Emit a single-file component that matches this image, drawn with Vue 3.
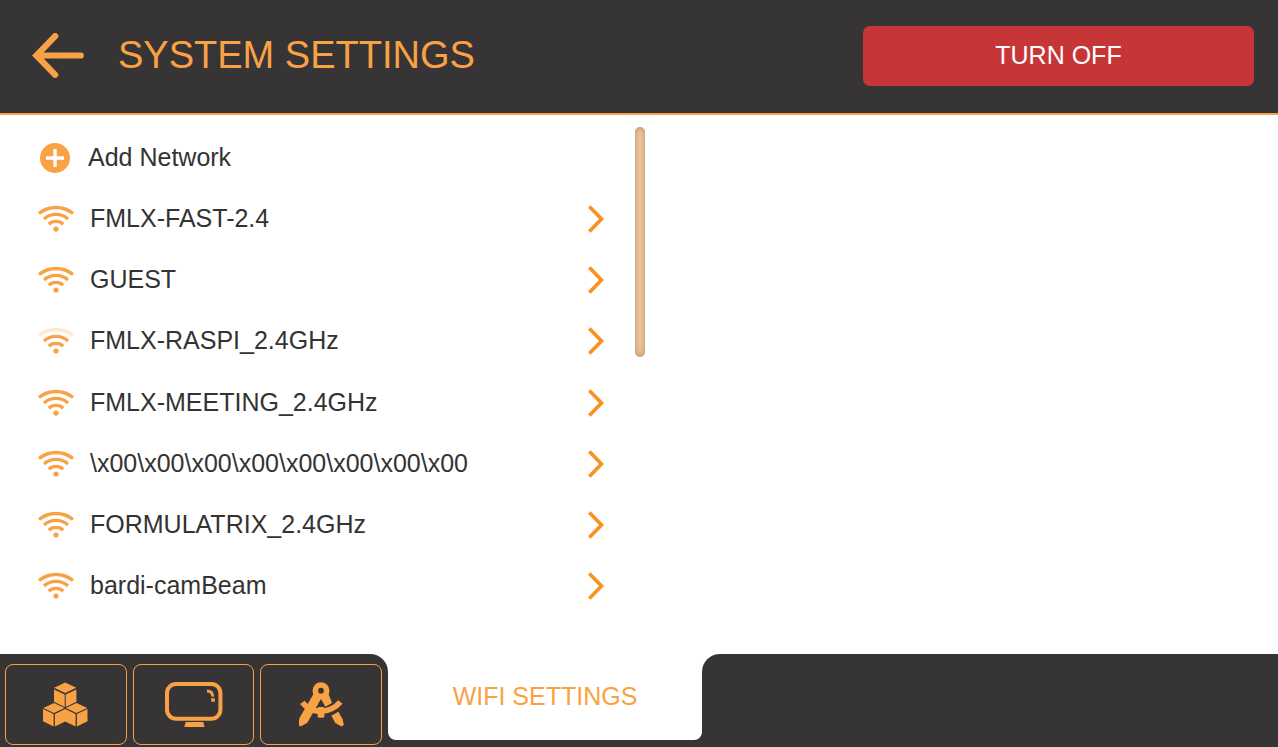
<template>
  <div class="page">
    <header class="header">
      <button class="back" aria-label="Back">
        <svg width="52" height="46" viewBox="0 0 52 46">
          <path d="M23.2 3.2L4.4 22.5L23.2 41.8M5 22.5H48.8" fill="none" stroke="currentColor" stroke-width="6.2" stroke-linecap="round" />
        </svg>
      </button>
      <h1 class="title">SYSTEM SETTINGS</h1>
      <button class="turn-off">TURN OFF</button>
    </header>

    <main class="content">
      <section class="panel">
        <ul class="list">
          <li class="item">
            <button class="row add">
              <svg width="30" height="30" viewBox="0 0 30 30">
                <circle cx="15" cy="15" r="15" fill="currentColor" />
                <path d="M15 6V24M6 15H24" stroke="#fff" stroke-width="3.4" />
              </svg>
              <span class="name">Add Network</span>
            </button>
          </li>
          <li v-for="network in networks" :key="network.name" class="item">
            <button class="row">
              <svg width="36" height="28" viewBox="0 0 36 28" fill="none" stroke="currentColor" stroke-width="3.3">
                <path :class="{ weak: network.level < 3 }" d="M1 8.5A27 27 0 0 1 35 8.5" />
                <path d="M6 13.9A18 18 0 0 1 30 13.9" />
                <path d="M10.8 19.2A10.5 10.5 0 0 1 25.2 19.2" />
                <circle cx="18" cy="24" r="2.6" fill="currentColor" stroke="none" />
              </svg>
              <span class="name">{{ network.name }}</span>
              <svg class="chevron" width="16" height="28" viewBox="0 0 16 28">
                <path d="M1.3 1.5L13.5 14L1.3 26.5" fill="none" stroke="currentColor" stroke-width="3.7" />
              </svg>
            </button>
          </li>
        </ul>
        <div class="track">
          <div class="thumb"></div>
        </div>
      </section>
    </main>

    <footer class="footer">
      <nav class="nav">
        <button class="nav-btn" aria-label="Modules">
          <svg width="45" height="45" viewBox="0 0 45 45" fill="currentColor">
            <path d="M22.2 0.6L33.3 5.8L22.2 11.1L11.1 5.8Z" />
            <path d="M11 7.4L21.7 12.5V25L11 19.8Z" />
            <path d="M33.4 7.4L22.7 12.5V25L33.4 19.8Z" />
            <path d="M11 20.9L21.6 25.9L11 31L0.4 25.9Z" />
            <path d="M33.5 20.9L44.1 25.9L33.5 31L22.9 25.9Z" />
            <path d="M0 27L10.6 32.1V44.4L0 39.2Z" />
            <path d="M11.9 32.1L22.2 27L32.6 32.1V44.4L22.2 39.4L11.9 44.4Z" />
            <path d="M44.5 27L33.9 32.1V44.4L44.5 39.2Z" />
          </svg>
        </button>
        <button class="nav-btn" aria-label="Display">
          <svg width="58" height="45" viewBox="0 0 58 45">
            <rect x="2" y="2" width="53.4" height="34.8" rx="9" fill="none" stroke="currentColor" stroke-width="4" />
            <path d="M42 9C45.6 9 47.6 11 47.8 14.6" fill="none" stroke="currentColor" stroke-width="2.8" />
            <path d="M46.2 16.3H49.8V19.8H46.2ZM20.7 40H38.3L39.5 45H19.3Z" fill="currentColor" />
          </svg>
        </button>
        <button class="nav-btn" aria-label="Calibration">
          <svg width="45" height="45" viewBox="25 21 135 135" fill="currentColor">
            <circle cx="91" cy="47" r="17" fill="none" stroke="currentColor" stroke-width="17" />
            <path d="M68 58L26 130L24 148Q25 156 33 153L50 143L91 72L104 95L124 84L114 58L91 67Z" />
            <path d="M122 122L143 110L156 133L159 148Q157 156 150 153L134 144Z" />
            <path d="M35 82Q55 109 91 109Q127 107 149 81" fill="none" stroke="currentColor" stroke-width="17" />
            <rect x="81" y="96" width="20" height="32" rx="4" />
          </svg>
        </button>
      </nav>
      <div class="tab">WIFI SETTINGS</div>
      <div class="rest"></div>
    </footer>
  </div>
</template>

<script setup>
const networks = [
  { name: 'FMLX-FAST-2.4', level: 3 },
  { name: 'GUEST', level: 3 },
  { name: 'FMLX-RASPI_2.4GHz', level: 2 },
  { name: 'FMLX-MEETING_2.4GHz', level: 3 },
  { name: '\\x00\\x00\\x00\\x00\\x00\\x00\\x00\\x00', level: 3 },
  { name: 'FORMULATRIX_2.4GHz', level: 3 },
  { name: 'bardi-camBeam', level: 3 },
]
</script>

<style>
body{margin:0}
</style>

<style scoped>
.page{
  --orange:#f9a245; --dark:#373435;
  display:flex; flex-direction:column; min-height:100vh; background:#fff; color:#333;
  font-family:"Liberation Sans", Arial, sans-serif; font-size:25px;
}
button{padding:0; border:0; background:none; font:inherit; color:inherit; cursor:pointer}
svg{display:block; flex:none}

.header{
  display:flex; align-items:center; padding:26px 24px 27px 32px;
  background:var(--dark); color:var(--orange); border-bottom:2px solid var(--orange);
}
.title{flex:1; margin:0 0 0 34px; font-size:38px; font-weight:400; line-height:40px; padding-bottom:2px}
.turn-off{width:32%; height:60px; padding-bottom:2px; border-radius:7px; background:#c73636; color:#fff}

.content{flex:1; display:flex}
.panel{display:flex; width:50.5%; padding:12px 0 37px; box-sizing:border-box}
.list{flex:1; display:flex; flex-direction:column; margin:0; padding:0; list-style:none}
.item{flex:1; display:flex}
.row{flex:1; display:flex; align-items:center; gap:16px; min-height:48px; padding:0 31px 0 38px; text-align:left}
.row svg{color:var(--orange)}
.row .chevron{color:#f7931e}
.add{gap:18px; padding-left:40px}
.name{flex:1; padding-bottom:1px}
.weak{opacity:.25}
.track{width:10px}
.thumb{height:47%; border-radius:5px; background:#f3c79b; box-shadow:inset 0 0 6px rgba(0,0,0,.3)}

/* white upper half shows through the rounded corners next to the tab */
.footer{
  display:grid; grid-template-columns:388fr 314fr 576fr; height:93px;
  background:linear-gradient(#fff 50%, var(--dark) 50%); color:var(--orange);
}
.nav{display:flex; gap:6px; padding:10px 6px 2px 5px; background:var(--dark); border-top-right-radius:18px}
.nav-btn{flex:1; display:grid; place-items:center; border:1px solid var(--orange); border-radius:8px}
.tab{display:grid; place-items:center; margin-bottom:7px; padding-bottom:2px; background:#fff; border-radius:0 0 8px 8px}
.rest{background:var(--dark); border-top-left-radius:18px}
</style>
